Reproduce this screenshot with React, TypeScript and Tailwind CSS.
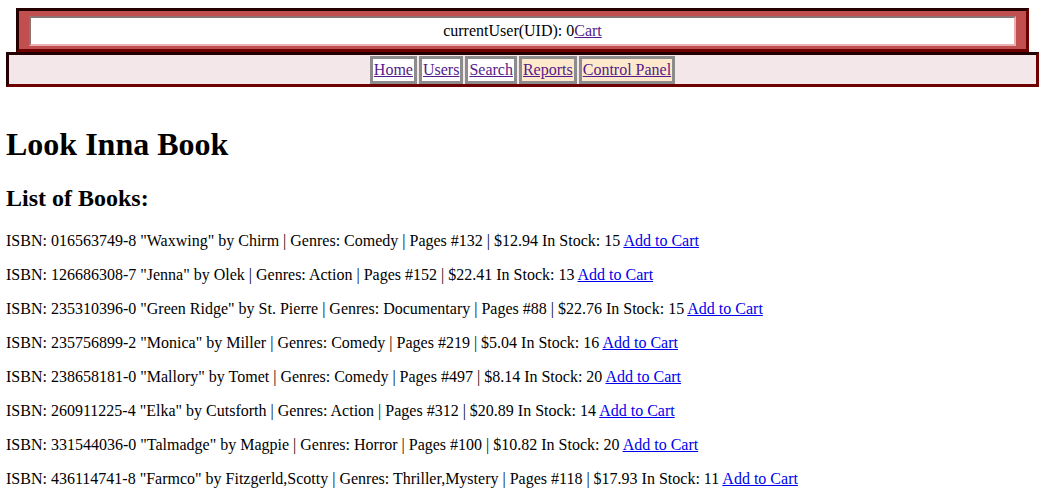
const books = [
  { isbn: "016563749-8", title: "Waxwing", author: "Chirm", genres: "Comedy", pages: 132, price: "12.94", stock: 15 },
  { isbn: "126686308-7", title: "Jenna", author: "Olek", genres: "Action", pages: 152, price: "22.41", stock: 13 },
  { isbn: "235310396-0", title: "Green Ridge", author: "St. Pierre", genres: "Documentary", pages: 88, price: "22.76", stock: 15 },
  { isbn: "235756899-2", title: "Monica", author: "Miller", genres: "Comedy", pages: 219, price: "5.04", stock: 16 },
  { isbn: "238658181-0", title: "Mallory", author: "Tomet", genres: "Comedy", pages: 497, price: "8.14", stock: 20 },
  { isbn: "260911225-4", title: "Elka", author: "Cutsforth", genres: "Action", pages: 312, price: "20.89", stock: 14 },
  { isbn: "331544036-0", title: "Talmadge", author: "Magpie", genres: "Horror", pages: 100, price: "10.82", stock: 20 },
  { isbn: "436114741-8", title: "Farmco", author: "Fitzgerld,Scotty", genres: "Thriller,Mystery", pages: 118, price: "17.93", stock: 11 },
];

const navLinks = [
  { label: "Home", warm: false },
  { label: "Users", warm: false },
  { label: "Search", warm: false },
  { label: "Reports", warm: true },
  { label: "Control Panel", warm: true },
];

export default function App() {
  return (
    <div className="min-h-screen bg-white pt-[8px] pl-[6px] pr-[10px] text-[16px] leading-[18px] text-black font-['Liberation_Serif',serif]">
      {/* user bar */}
      <div className="mx-[10px] h-[44px] border-[3px] border-t-[#240000] border-l-[#240000] border-b-[#6e0000] border-r-[#6e0000] bg-[#c14f4f] px-[10px] pt-[5px] pb-[3px]">
        <div className="flex h-[30px] items-center justify-center border-2 border-t-[#8c7474] border-l-[#8c7474] border-b-[#eab0b0] border-r-[#eab0b0] bg-white">
          <span>
            currentUser(UID): 0
            <a href="#" className="text-[#551a8b] underline">Cart</a>
          </span>
        </div>
      </div>

      {/* nav bar */}
      <div className="flex h-[35px] justify-center gap-[2px] border-[3px] border-t-[#240000] border-l-[#240000] border-b-[#6e0000] border-r-[#6e0000] bg-[#f4e7ea] pt-px">
        {navLinks.map((n) => (
          <div
            key={n.label}
            className={`flex h-[28px] items-center border-[3px] border-[#8c8c8c] px-px ${n.warm ? "bg-[#ffe9cc]" : "bg-white"}`}
          >
            <a href="#" className="text-[#551a8b] underline">{n.label}</a>
          </div>
        ))}
      </div>

      <h1 className="mt-[39px] mb-[21px] text-[32px] leading-[37px] font-bold">Look Inna Book</h1>
      <h2 className="mb-[20px] text-[24px] leading-[28px] font-bold">List of Books:</h2>

      <div className="flex flex-col gap-[16px]">
        {books.map((b) => (
          <p key={b.isbn} className="leading-[18px]">
            ISBN: {b.isbn} "{b.title}" by {b.author} | Genres: {b.genres} | Pages #{b.pages} | ${b.price} In Stock: {b.stock}{" "}
            <a href="#" className="text-[#0000ee] underline">Add to Cart</a>
          </p>
        ))}
      </div>
    </div>
  );
}
